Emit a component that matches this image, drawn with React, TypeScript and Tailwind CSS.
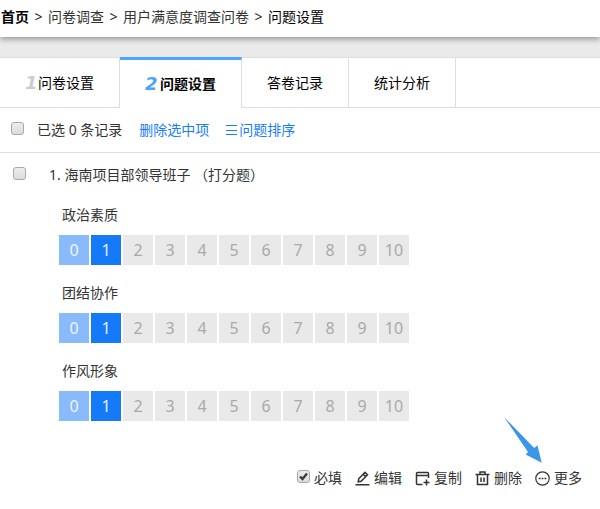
import React from "react";

const font =
  "font-['Noto_Sans','Noto_Sans_CJK_SC',sans-serif] text-sm leading-5 text-[#333]";

const checkboxClass =
  "peer col-start-1 row-start-1 h-[13px] w-[13px] appearance-none rounded-[3px] border border-[#a8a8a8] bg-linear-to-b from-[#ededed] to-[#dcdcdc]";

const scores = [0, 1, 2, 3, 4, 5, 6, 7, 8, 9, 10];

const topics = ["政治素质", "团结协作", "作风形象"];

function Checkbox({
  label,
  id,
  defaultChecked,
}: {
  label?: string;
  id?: string;
  defaultChecked?: boolean;
}) {
  return (
    <span className="mb-[3px] grid shrink-0">
      <input
        id={id}
        type="checkbox"
        aria-label={label}
        defaultChecked={defaultChecked}
        className={checkboxClass}
      />
      <svg
        viewBox="0 0 13 13"
        className="pointer-events-none invisible col-start-1 row-start-1 h-[13px] w-[13px] peer-checked:visible"
      >
        <path d="M3 6.5 5.5 9 10 3.5" fill="none" stroke="#3c3c3c" strokeWidth="2.4" />
      </svg>
    </span>
  );
}

function Breadcrumb() {
  const sep = <span className="mx-[5px] w-[9px] text-center text-[#222]">&gt;</span>;
  return (
    <nav className="relative flex h-[37px] items-center bg-white pb-1 pl-px shadow-[0_2px_6px_rgba(0,0,0,0.38)]">
      <a href="#home" className="font-bold text-black">首页</a>
      {sep}
      <a href="#surveys">问卷调查</a>
      {sep}
      <a href="#survey">用户满意度调查问卷</a>
      {sep}
      <span className="text-black">问题设置</span>
    </nav>
  );
}

function Tabs() {
  const tab = "flex items-center border-r border-b border-[#ddd] px-[25px] text-black";
  const num = "font-['DejaVu_Sans',sans-serif] text-lg font-bold italic";
  return (
    <div className="mt-5 flex h-[51px] border-t border-[#ddd] bg-white">
      <button className={tab}>
        <span className={`${num} w-[13px] text-left text-[#ccc]`}>1</span>
        问卷设置
      </button>
      <button className="-mt-px flex items-center border-t-3 border-r border-t-[#4ba5ff] border-r-[#ddd] px-[25px] font-bold text-black">
        <span className={`${num} w-[15px] text-left text-[#4ba5ff]`}>2</span>
        问题设置
      </button>
      <button className={tab}>答卷记录</button>
      <button className={tab}>统计分析</button>
      <div className="flex-1 border-b border-[#ddd]" />
    </div>
  );
}

function ScoreRow({ title }: { title: string }) {
  const [value, setValue] = React.useState(1);

  return (
    <div>
      <h3 className="ml-[3px]">{title}</h3>
      <div className="mt-[10px] flex gap-[2px] text-base">
        {scores.map((n) => (
          <button
            key={n}
            onClick={() => setValue(n)}
            className={
              "h-[30px] w-[30px] " +
              (n === value
                ? "bg-[#147af8] text-[#e3efff]"
                : n < value
                ? "bg-[#89bbfc] text-[#eef5ff]"
                : "bg-[#e9e9e9] text-[#aaa]")
            }
          >
            {n}
          </button>
        ))}
      </div>
    </div>
  );
}

function Icon({ children }: { children: React.ReactNode }) {
  return (
    <svg
      viewBox="0 0 15 15"
      className="h-[15px] w-[15px]"
      fill="none"
      stroke="#333"
      strokeWidth="1.5"
    >
      {children}
    </svg>
  );
}

function Actions() {
  const item = "flex items-center gap-1";
  return (
    <div className="flex justify-end gap-[13px] pr-[18px]">
      <div className={item}>
        <Checkbox id="required" defaultChecked />
        <label htmlFor="required">必填</label>
      </div>
      <button className={item}>
        <Icon>
          <path d="M.5 13.75h14" />
          <path d="m3.2 10.8.5-3 6.3-6.4 2.5 2.4-6.4 6.4zM8.3 3.2l2.4 2.4" />
        </Icon>
        编辑
      </button>
      <button className={item}>
        <Icon>
          <path d="M13.5 7V2.5q0-1-1-1h-10q-1 0-1 1v10q0 1 1 1h5M1.5 4.5h12M11.5 8.5v6M8.5 11.5h6" />
        </Icon>
        复制
      </button>
      <button className={item}>
        <Icon>
          <path d="M.5 3.5h14M5 3V1h5v2M2.5 3.5v10h10v-10M6 6.5v4.5M9 6.5v4.5" />
        </Icon>
        删除
      </button>
      <button className={`${item} relative`}>
        <Icon>
          <circle cx="7.5" cy="7.5" r="6.7" strokeWidth="1.2" />
          <path d="M3.7 7.5h1.8M6.6 7.5h1.8M9.5 7.5h1.8" strokeWidth="1.7" />
        </Icon>
        更多
        {/* pointer to the "more" menu */}
        <svg
          viewBox="0 0 44 52"
          className="absolute right-[38px] bottom-full mb-[3px] h-[52px] w-[44px]"
        >
          <path d="M4 4 28 39l-2.300 2.500 16 8.300-4.200-17.300-3.300 2.500z" fill="#3b96e8" />
        </svg>
      </button>
    </div>
  );
}

export default function App() {
  return (
    <div className={`${font} min-h-screen bg-white`}>
      <header className="bg-[#eaeaea]">
        <Breadcrumb />
        <Tabs />
      </header>

      <div className="flex h-[45px] items-center border-b border-[#ddd] pl-[11px]">
        <Checkbox label="全选" />
        <span className="ml-[13px]">已选 0 条记录</span>
        <button className="ml-[17px] text-[#1a7cff]">删除选中项</button>
        <button className="ml-[17px] flex items-center text-[#1a7cff]">
          <svg viewBox="0 0 13 12" className="h-3 w-[13px]" stroke="currentColor">
            <path d="M0 1.5h11M0 6.5h11M0 10.500h11" />
          </svg>
          问题排序
        </button>
      </div>

      <main className="pt-3">
        <div className="flex items-center pl-[13px]">
          <Checkbox label="选择第1题" />
          <h2 className="ml-[23px]">1. 海南项目部领导班子 （打分题）</h2>
        </div>
        <div className="mt-5 mb-[47px] flex flex-col gap-[18px] pl-[59px]">
          {topics.map((t) => (
            <ScoreRow key={t} title={t} />
          ))}
        </div>
        <Actions />
      </main>
    </div>
  );
}
